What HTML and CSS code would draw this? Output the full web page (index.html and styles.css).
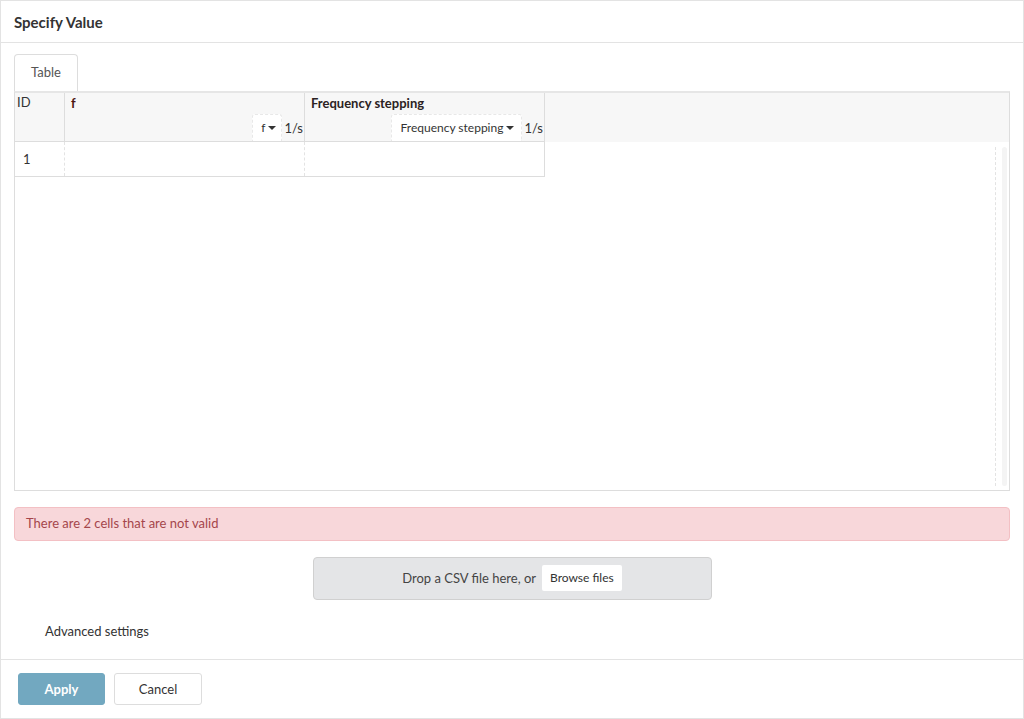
FILE: index.html
```html
<!DOCTYPE html>
<html>
<head>
    <meta charset="UTF-8">
    <title>Specify Value</title>
    <link rel="stylesheet" href="styles.css">
</head>
<body>
<div id="modal">
    <div class="modal-head">Specify Value</div>
    <div class="modal-body">
        <ul class="tabs">
            <li class="active">Table</li>
        </ul>
        <div class="grid">
            <div class="grid-head">
                <div class="hcell id-col">ID</div>
                <div class="hcell val-col">
                    <span class="hlabel red">f</span>
                    <div class="unit-row">
                        <span class="drop small">f<i class="caret"></i></span><span class="unit">1/s</span>
                    </div>
                </div>
                <div class="hcell val-col">
                    <span class="hlabel">Frequency stepping</span>
                    <div class="unit-row">
                        <span class="drop">Frequency stepping<i class="caret"></i></span><span class="unit">1/s</span>
                    </div>
                </div>
                <div class="hfill"></div>
            </div>
            <div class="grid-rows">
                <div class="row">
                    <div class="cell id-col">1</div>
                    <div class="cell val-col"></div>
                    <div class="cell val-col"></div>
                </div>
                <div class="scroll-track"></div>
            </div>
        </div>
        <div class="alert">There are 2 cells that are not valid</div>
        <div class="dropzone">Drop a CSV file here, or <span class="browse">Browse files</span></div>
        <div class="advanced">Advanced settings</div>
    </div>
    <div class="modal-foot">
        <button class="btn primary">Apply</button>
        <button class="btn">Cancel</button>
    </div>
</div>
</body>
</html>
```

FILE: styles.css
```css
html,body{
    margin: 0;
    height: 100%;
}
body{
    font-family: Lato, "Open Sans", sans-serif;
    color: #333;
    background: #fff;
}
ul,li{
    margin: 0;
    padding: 0;
    list-style: none;
}
#modal{
    width: 1024px;
    height: 719px;
    box-sizing: border-box;
    border: 1px solid #e3e3e3;
    display: flex;
    flex-direction: column;
}
.modal-head{
    height: 41px;
    border-bottom: 1px solid #e3e3e3;
    padding-left: 13px;
    font: bold 15px/42px Lato, sans-serif;
    color: #333;
}
.modal-body{
    padding: 11px 13px 0 13px;
    flex: 1;
}
.tabs{
    display: flex;
}
.tabs li{
    width: 62px;
    height: 36px;
    border: 1px solid #ddd;
    border-bottom: none;
    border-radius: 4px 4px 0 0;
    text-align: center;
    font-size: 13px;
    line-height: 34px;
    color: #555;
}
.grid{
    height: 397px;
    border: 1px solid #ddd;
    border-top-width: 2px;
    border-top-color: #e6e6e6;
    display: flex;
    flex-direction: column;
}
.grid-head{
    display: flex;
    height: 49px;
    background: #f7f7f7;
}
.hcell{
    box-sizing: border-box;
    border-right: 1px solid #ddd;
    border-bottom: 1px solid #ddd;
    font-size: 13px;
    padding: 1px 1px 0 2px;
}
.id-col{
    width: 50px;
}
.val-col{
    width: 240px;
    display: flex;
    flex-direction: column;
    justify-content: space-between;
}
.hcell.val-col{
    padding-left: 6px;
}
.hlabel{
    font-weight: bold;
    color: #2b2222;
    padding-top: 1px;
}
.hlabel.red{
    color: #4a1410;
}
.unit-row{
    display: flex;
    justify-content: flex-end;
    align-items: center;
}
.drop{
    background: #fff;
    border: 1px dashed #e8e8e8;
    border-bottom: none;
    border-radius: 3px 3px 0 0;
    height: 26px;
    line-height: 26px;
    padding: 0 7px 0 9px;
    font-size: 12px;
    color: #333;
}
.drop.small{
    padding: 0 5px 0 8px;
}
.caret{
    display: inline-block;
    width: 0;
    height: 0;
    border-left: 4px solid transparent;
    border-right: 4px solid transparent;
    border-top: 4px solid #333;
    margin-left: 3px;
    vertical-align: 2px;
}
.unit{
    margin-left: 2px;
    font-size: 13px;
    color: #333;
}
.hfill{
    flex: 1;
}
.grid-rows{
    flex: 1;
    position: relative;
}
.row{
    display: flex;
    height: 34px;
    width: 530px;
    border-bottom: 1px solid #ddd;
}
.cell{
    box-sizing: border-box;
    border-right: 1px dashed #e3e3e3;
    font-size: 13px;
    line-height: 34px;
}
.row .cell:last-child{
    border-right: 1px solid #ddd;
}
.cell.id-col{
    padding-left: 8px;
}
.scroll-track{
    position: absolute;
    right: 2px;
    top: 5px;
    bottom: 4px;
    width: 7px;
    border-left: 1px dashed #e3e3e3;
    padding-left: 4px;
}
.scroll-track:after{
    content: "";
    position: absolute;
    left: 6px;
    top: 0;
    bottom: 0;
    width: 5px;
    border-radius: 3px;
    background: #f4f4f4;
}
.alert{
    margin-top: 16px;
    height: 32px;
    border: 1px solid #f3c0c4;
    border-radius: 4px;
    background: #f8d7da;
    color: #a5464b;
    font-size: 13px;
    line-height: 31px;
    padding-left: 11px;
}
.dropzone{
    width: 397px;
    height: 39px;
    margin: 16px auto 0;
    border: 1px solid #d0d0d0;
    border-radius: 4px;
    background: #e4e5e7;
    display: flex;
    justify-content: center;
    align-items: center;
    font-size: 13px;
    color: #444;
    padding-bottom: 2px;
}
.browse{
    background: #fff;
    border-radius: 2px;
    margin-left: 6px;
    height: 26px;
    line-height: 26px;
    padding: 0 8px;
    font-size: 12px;
    color: #333;
}
.advanced{
    margin-top: 23px;
    padding-left: 31px;
    font-size: 13px;
    color: #333;
}
.modal-foot{
    height: 58px;
    border-top: 1px solid #e3e3e3;
    display: flex;
    align-items: center;
    padding-left: 17px;
    gap: 9px;
}
.btn{
    width: 88px;
    height: 32px;
    border: 1px solid #ddd;
    border-radius: 3px;
    background: #fff;
    font: 13px Lato, sans-serif;
    color: #333;
}
.btn.primary{
    width: 87px;
    background: #72a8c0;
    border-color: #72a8c0;
    color: #fff;
    font-weight: bold;
}
```
